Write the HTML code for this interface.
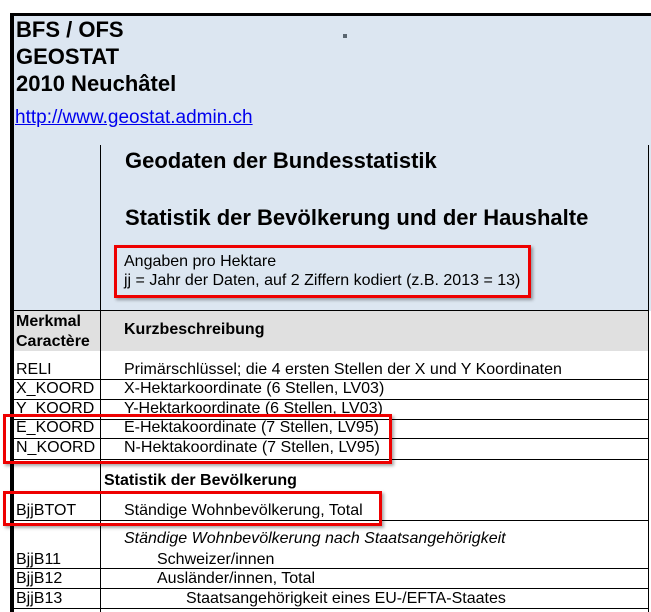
<!DOCTYPE html>
<html><head><meta charset="utf-8"><style>
body{margin:0;width:651px;height:612px;position:relative;overflow:hidden;background:#fff;font-family:"Liberation Sans",Arial,sans-serif;color:#000}
.a{position:absolute;white-space:nowrap}
.h{position:absolute;height:1px;background:#000}
.v{position:absolute;width:1px;background:#000}
.r{position:absolute;border:3px solid #e00;box-shadow:2px 2px 3px rgba(0,0,0,.35)}
.t{font-size:16px}
</style></head><body>
<div class="a" style="left:14px;top:16px;width:637px;height:295px;background:#dce6f1"></div>
<div class="a" style="left:14px;top:311px;width:634px;height:40px;background:#e0e0e0"></div>
<div class="a" style="left:10px;top:13px;width:641px;height:3px;background:#000"></div>
<div class="a" style="left:10px;top:13px;width:4px;height:599px;background:#000"></div>
<div class="a" style="left:343px;top:34px;width:4px;height:4px;background:#5a6670"></div>
<div class="a" style="left:16px;top:16px;font-size:22px;font-weight:bold;line-height:27px">BFS / OFS<br>GEOSTAT<br>2010 Neuchâtel</div>
<div class="a" style="left:15px;top:107px;font-size:19px;color:#00e;text-decoration:underline">http://www.geostat.admin.ch</div>
<div class="v" style="left:100px;top:145px;height:467px"></div>
<div class="v" style="left:648px;top:145px;height:467px"></div>
<div class="a" style="left:125px;top:148px;font-size:22px;font-weight:bold">Geodaten der Bundesstatistik</div>
<div class="a" style="left:125px;top:205px;font-size:22px;font-weight:bold">Statistik der Bevölkerung und der Haushalte</div>
<div class="a t" style="left:124px;top:252px;line-height:19px">Angaben pro Hektare<br>jj = Jahr der Daten, auf 2 Ziffern kodiert (z.B. 2013 = 13)</div>
<div class="h" style="left:14px;top:310px;width:635px"></div>
<div class="a" style="left:16px;top:312px;font-size:16px;font-weight:bold;line-height:20px">Merkmal<br>Caractère</div>
<div class="a" style="left:124px;top:321px;font-size:16px;font-weight:bold">Kurzbeschreibung</div>
<div class="h" style="left:14px;top:379px;width:635px"></div>
<div class="h" style="left:14px;top:399px;width:635px"></div>
<div class="h" style="left:14px;top:419px;width:635px"></div>
<div class="h" style="left:14px;top:438px;width:635px"></div>
<div class="h" style="left:14px;top:459px;width:635px"></div>
<div class="h" style="left:14px;top:520px;width:635px"></div>
<div class="h" style="left:14px;top:568px;width:635px"></div>
<div class="h" style="left:14px;top:588px;width:635px"></div>
<div class="h" style="left:14px;top:608px;width:635px"></div>
<div class="a t" style="left:16px;top:361px">RELI</div><div class="a t" style="left:124px;top:361px">Primärschlüssel; die 4 ersten Stellen der X und Y Koordinaten</div>
<div class="a t" style="left:16px;top:380px">X_KOORD</div><div class="a t" style="left:124px;top:380px">X-Hektarkoordinate (6 Stellen, LV03)</div>
<div class="a t" style="left:16px;top:400px">Y_KOORD</div><div class="a t" style="left:124px;top:400px">Y-Hektarkoordinate (6 Stellen, LV03)</div>
<div class="a t" style="left:16px;top:419px">E_KOORD</div><div class="a t" style="left:124px;top:419px">E-Hektakoordinate (7 Stellen, LV95)</div>
<div class="a t" style="left:16px;top:439px">N_KOORD</div><div class="a t" style="left:124px;top:439px">N-Hektakoordinate (7 Stellen, LV95)</div>
<div class="a" style="left:104px;top:472px;font-size:16px;font-weight:bold">Statistik der Bevölkerung</div>
<div class="a t" style="left:16px;top:502px">BjjBTOT</div><div class="a t" style="left:124px;top:502px">Ständige Wohnbevölkerung, Total</div>
<div class="a t" style="left:124px;top:530px;font-style:italic">Ständige Wohnbevölkerung nach Staatsangehörigkeit</div>
<div class="a t" style="left:16px;top:551px">BjjB11</div><div class="a t" style="left:157px;top:551px">Schweizer/innen</div>
<div class="a t" style="left:16px;top:570px">BjjB12</div><div class="a t" style="left:157px;top:570px">Ausländer/innen, Total</div>
<div class="a t" style="left:16px;top:590px">BjjB13</div><div class="a t" style="left:186px;top:590px">Staatsangehörigkeit eines EU-/EFTA-Staates</div>
<div class="r" style="left:114px;top:245px;width:411px;height:47px"></div>
<div class="r" style="left:3px;top:414px;width:383px;height:44px"></div>
<div class="r" style="left:3px;top:491px;width:373px;height:29px"></div>
</body></html>
